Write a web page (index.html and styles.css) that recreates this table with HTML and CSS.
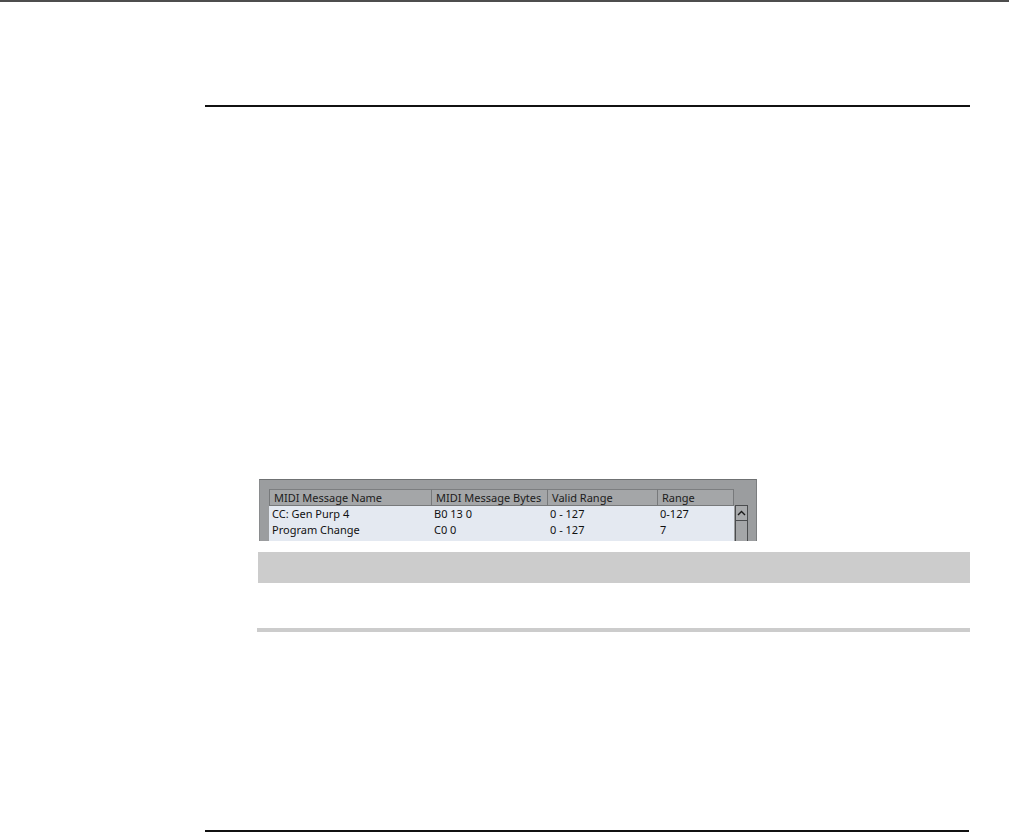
FILE: index.html
```html
<!DOCTYPE html>
<html lang="en">
<head>
    <meta charset="UTF-8">
    <title>MIDI Message List</title>
    <link rel="stylesheet" href="styles.css">
</head>
<body>
    <div class="top-rule"></div>

    <div class="page">
        <div class="page-head"></div>

        <div class="page-body">
            <div class="figure">
                <div class="panel">
                    <div class="grid">
                        <div class="list">
                            <div class="row head">
                                <span>MIDI Message Name</span>
                                <span>MIDI Message Bytes</span>
                                <span>Valid Range</span>
                                <span>Range</span>
                            </div>
                            <div class="row">
                                <span>CC: Gen Purp 4</span>
                                <span>B0 13 0</span>
                                <span>0 - 127</span>
                                <span>0-127</span>
                            </div>
                            <div class="row">
                                <span>Program Change</span>
                                <span>C0 0</span>
                                <span>0 - 127</span>
                                <span>7</span>
                            </div>
                            <div class="row">
                                <span></span><span></span><span></span><span></span>
                            </div>
                        </div>
                        <div class="scrollbar">
                            <div class="scroll-corner"></div>
                            <div class="scroll-up">
                                <svg width="9" height="6" viewBox="0 0 9 6">
                                    <path d="M1 5 L4.5 1.5 L8 5" fill="none" stroke="#1a1a1a" stroke-width="1.4"/>
                                </svg>
                            </div>
                            <div class="scroll-track"></div>
                        </div>
                    </div>
                </div>
            </div>

            <div class="note-band"></div>
            <div class="note-rule"></div>
        </div>

        <div class="page-foot"></div>
    </div>
</body>
</html>
```

FILE: styles.css
```css
* {
    margin: 0;
    padding: 0;
    box-sizing: border-box;
}

body {
    font-family: "Noto Sans", "Open Sans", sans-serif;
    background: #ffffff;
    width: 1009px;
    height: 840px;
    overflow: hidden;
}

.top-rule {
    height: 2px;
    background: #4d4d4d;
}

.page {
    margin-left: 205px;
    width: 765px;
}

.page-head {
    height: 105px;
    border-bottom: 2px solid #111111;
}

.page-body {
    padding-top: 372px;
}

/* screenshot of the list panel */
.figure {
    margin-left: 54px;
    width: 498px;
    height: 62px;
    overflow: hidden;
}

.panel {
    height: 70px;
    background: #9b9d9f;
    border-top: 1px solid #6f7173;
    border-left: 1px solid #8a8c8e;
    border-right: 1px solid #7b7d7f;
    padding: 9px 8px 0 9px;
}

.grid {
    display: flex;
}

.list {
    width: 465px;
}

.row {
    display: grid;
    grid-template-columns: 162px 116px 110px 77px;
    height: 16px;
    background: #e4e9f1;
    font-size: 11px;
    line-height: 16px;
    color: #111111;
}

.row span {
    padding-left: 3px;
    white-space: nowrap;
    overflow: hidden;
}

.row.head {
    height: 17px;
    background: #a4a6a8;
    color: #1c1c1c;
}

.row.head span {
    border-top: 1px solid #7c7e80;
    border-left: 1px solid #77797b;
    border-bottom: 1px solid #77797b;
    padding-left: 4px;
    line-height: 15px;
}

.row.head span:last-child {
    border-right: 1px solid #77797b;
}

.scrollbar {
    width: 15px;
    margin-left: 1px;
    display: flex;
    flex-direction: column;
}

.scroll-corner {
    height: 16px;
}

.scroll-up {
    height: 16px;
    background: #a8aaac;
    border: 1px solid #4a4c4e;
    display: flex;
    align-items: center;
    justify-content: center;
}

.scroll-track {
    flex: 1;
    background: #a4a6a8;
    border-left: 1px solid #4a4c4e;
    border-right: 1px solid #4a4c4e;
}

/* note box */
.note-band {
    margin-top: 11px;
    margin-left: 53px;
    height: 31px;
    background: #cccccc;
}

.note-rule {
    margin-top: 45px;
    margin-left: 52px;
    height: 4px;
    background: #cccccc;
}

.page-foot {
    margin-top: 198px;
    border-top: 2px solid #111111;
    width: 764px;
}
```
